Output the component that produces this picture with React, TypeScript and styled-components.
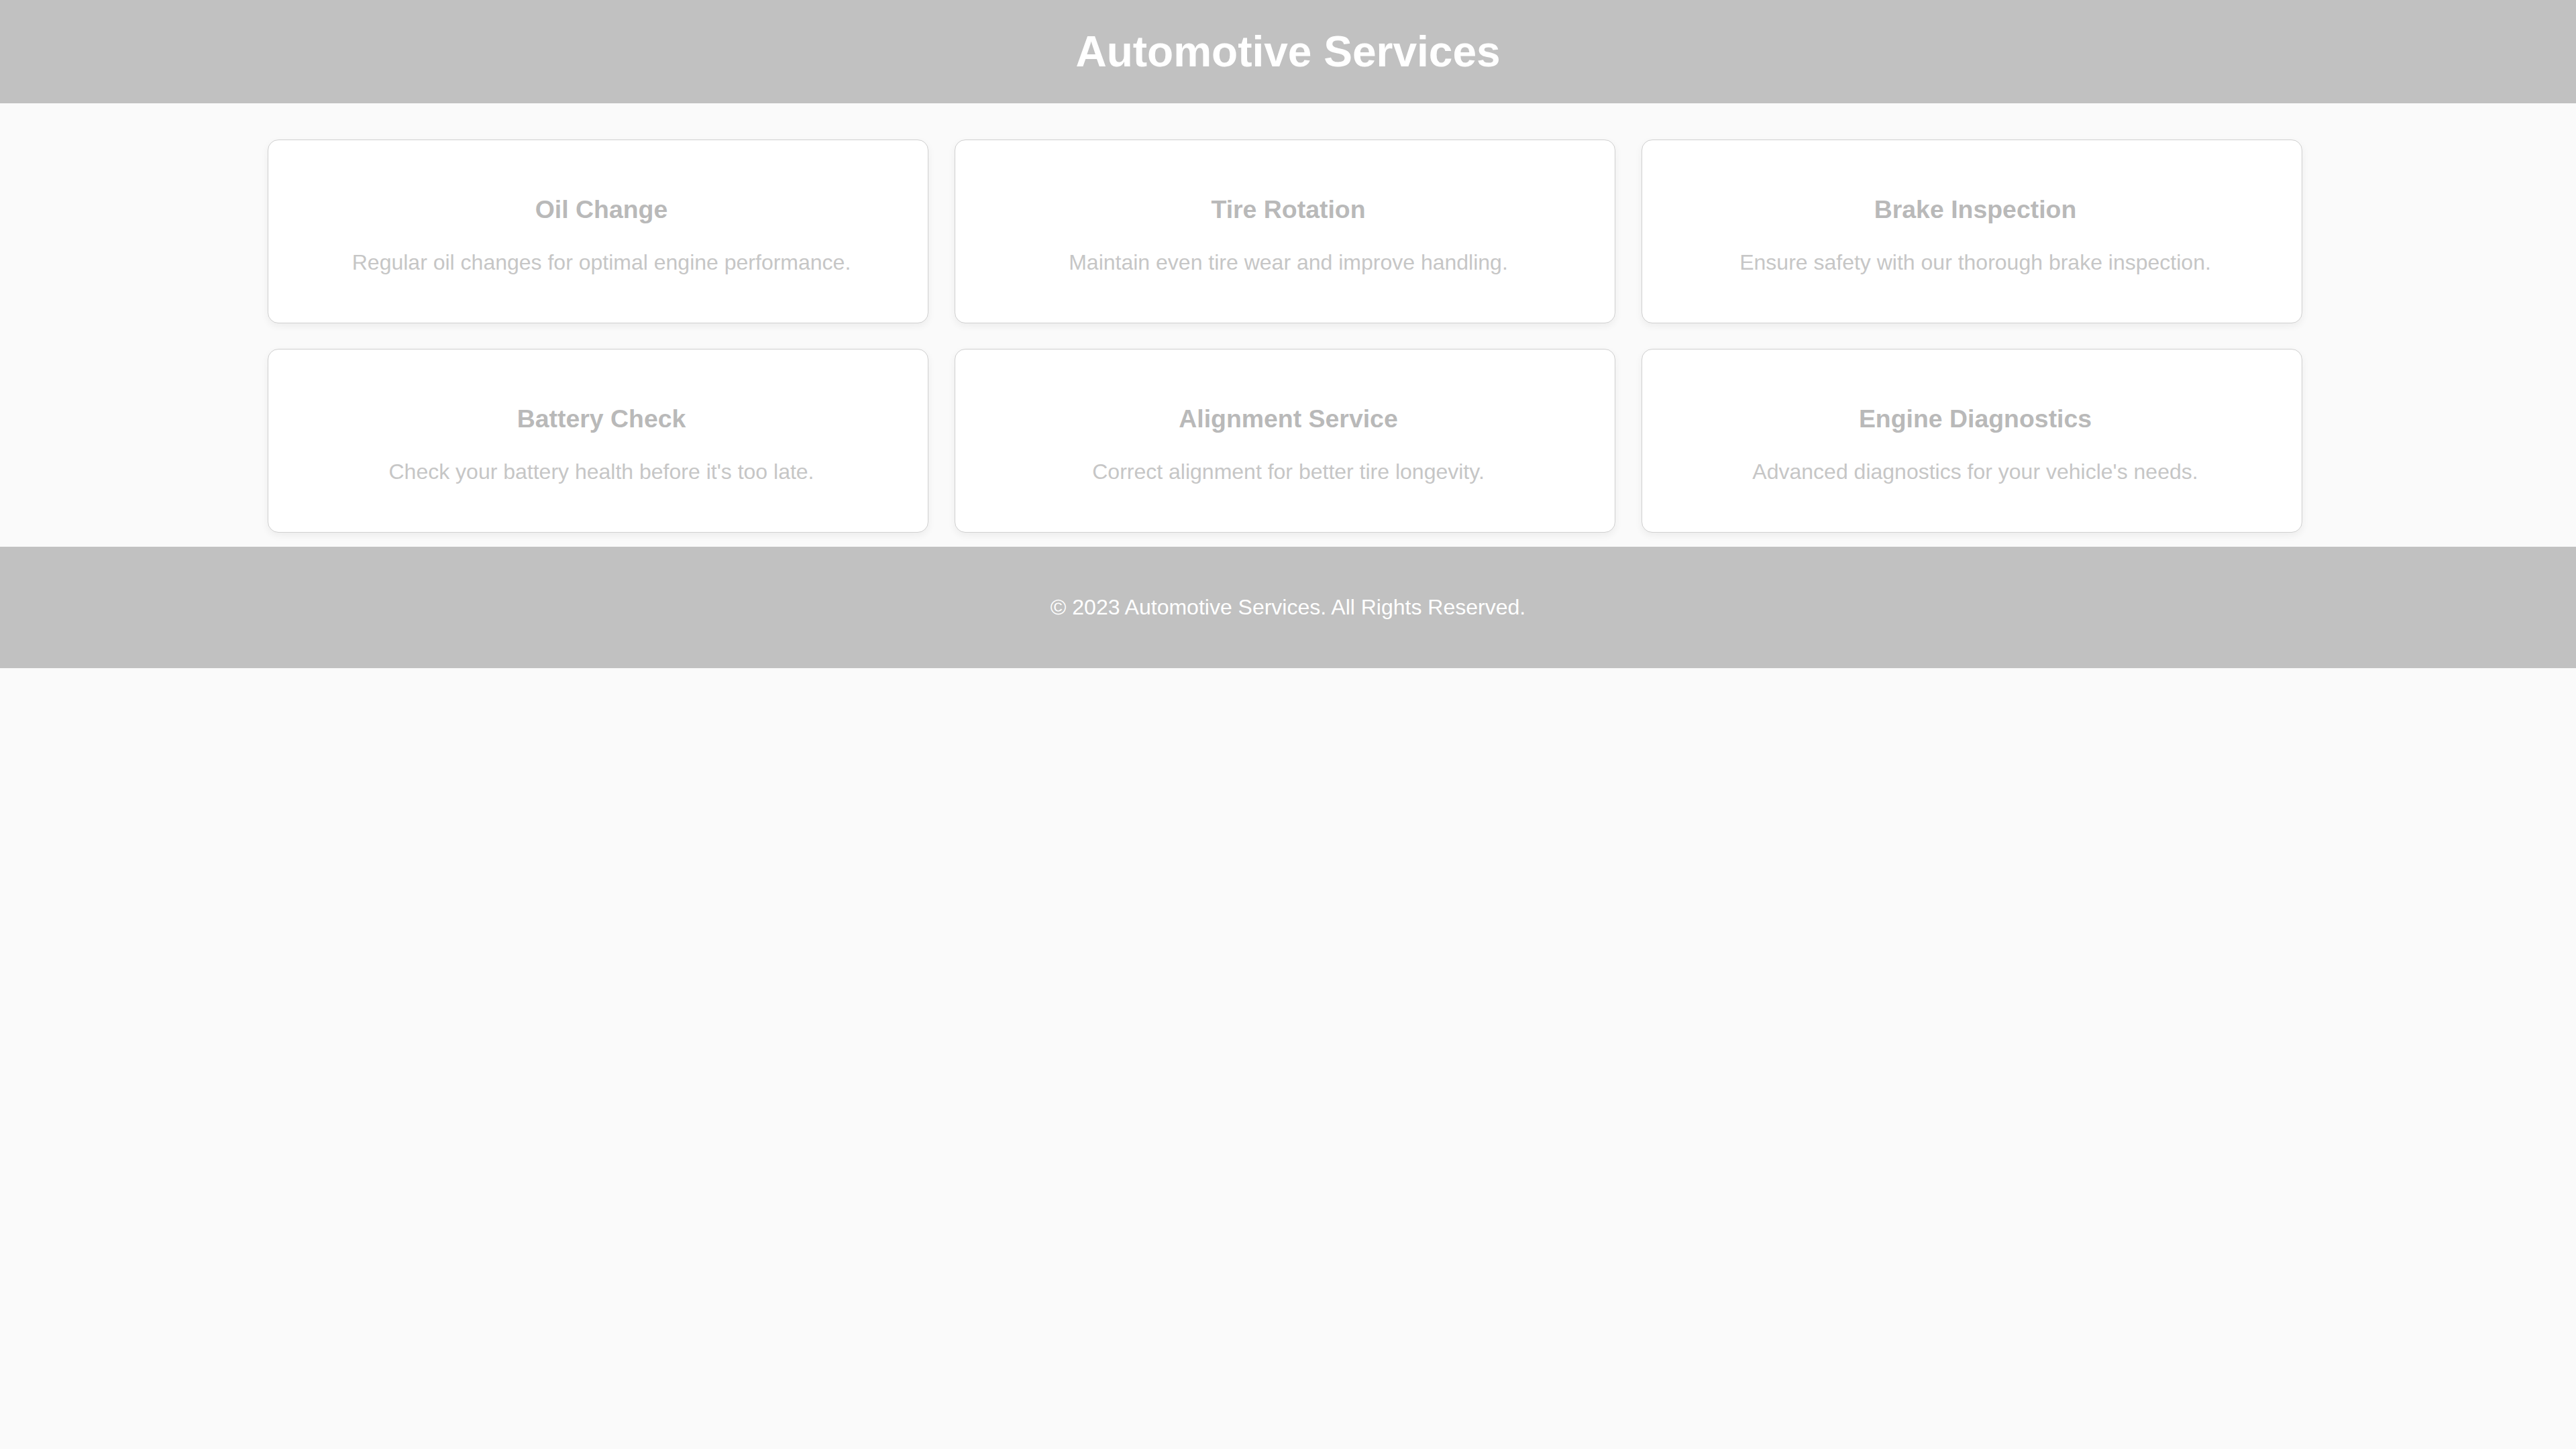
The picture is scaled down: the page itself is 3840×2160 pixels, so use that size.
import React from "react";
import styled, { createGlobalStyle } from "styled-components";

const GlobalStyle = createGlobalStyle`
  html, body {
    margin: 0;
    padding: 0;
    background: #fafafa;
    font-family: "Liberation Sans", Arial, Helvetica, sans-serif;
    font-size: 32px;
  }
`;

const Header = styled.header`
  background: #c1c1c1;
  padding: 40px 0;
  text-align: center;
`;

const Title = styled.h1`
  margin: 0;
  font-size: 64px;
  font-weight: bold;
  color: #ffffff;
`;

const Main = styled.main`
  padding: 54px 9px 21px 0;
`;

const Grid = styled.div`
  max-width: 3033px;
  margin: 0 auto;
  display: grid;
  grid-template-columns: repeat(3, 1fr);
  column-gap: 39px;
  row-gap: 38px;
`;

const Card = styled.div`
  background: #ffffff;
  border: 1px solid #d0d0d0;
  border-radius: 16px;
  box-shadow: 0 4px 12px rgba(0, 0, 0, 0.06);
  padding: 82px 35px 71px 45px;
  text-align: center;
`;

const CardTitle = styled.h3`
  margin: 0 0 39px;
  font-size: 37.44px;
  font-weight: bold;
  color: #b9b9b9;
`;

const CardText = styled.p`
  margin: 0;
  font-size: 32px;
  color: #c6c6c6;
`;

const Footer = styled.footer`
  background: #c1c1c1;
  padding: 40px 0;
  text-align: center;
`;

const FooterText = styled.p`
  margin: 32px 0;
  font-size: 32px;
  color: #ffffff;
`;

const services = [
  { title: "Oil Change", text: "Regular oil changes for optimal engine performance." },
  { title: "Tire Rotation", text: "Maintain even tire wear and improve handling." },
  { title: "Brake Inspection", text: "Ensure safety with our thorough brake inspection." },
  { title: "Battery Check", text: "Check your battery health before it's too late." },
  { title: "Alignment Service", text: "Correct alignment for better tire longevity." },
  { title: "Engine Diagnostics", text: "Advanced diagnostics for your vehicle's needs." },
];

const App: React.FC = () => {
  return (
    <>
      <GlobalStyle />
      <Header>
        <Title>Automotive Services</Title>
      </Header>
      <Main>
        <Grid>
          {services.map((s) => (
            <Card key={s.title}>
              <CardTitle>{s.title}</CardTitle>
              <CardText>{s.text}</CardText>
            </Card>
          ))}
        </Grid>
      </Main>
      <Footer>
        <FooterText>© 2023 Automotive Services. All Rights Reserved.</FooterText>
      </Footer>
    </>
  );
};

export default App;
